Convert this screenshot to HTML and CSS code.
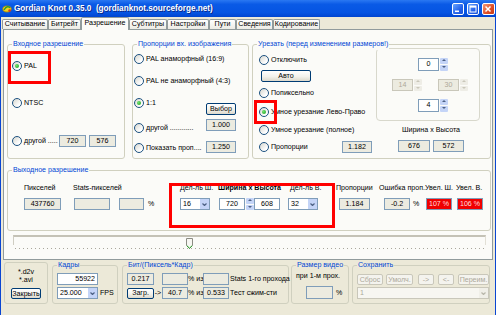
FILE: index.html
```html
<!DOCTYPE html>
<html lang="ru">
<head>
    <meta charset="UTF-8">
    <meta name="viewport" content="width=device-width, initial-scale=1.0">
    <title>Gordian Knot 0.35.0</title>
    <link rel="stylesheet" href="styles.css">
</head>
<body>
<div class="win">
    <div class="titlebar">
        <svg class="appicon" viewBox="0 0 10 10">
            <ellipse cx="5" cy="5" rx="4.2" ry="3" fill="#f3d21c" stroke="#b08a00" stroke-width="0.8"/>
            <path d="M2 6 C4 2 7 2 8 4" fill="none" stroke="#2f9a2f" stroke-width="1.4"/>
            <circle cx="7.6" cy="6.6" r="1.3" fill="#d63a1c"/>
        </svg>
        <span class="title">Gordian Knot 0.35.0&nbsp; (gordianknot.sourceforge.net)</span>
        <div class="capbtns">
            <span class="cb"><svg viewBox="0 0 10 10"><rect x="2" y="6.5" width="4" height="1.6" fill="#fff"/></svg></span>
            <span class="cb"><svg viewBox="0 0 10 10"><rect x="2" y="2" width="6" height="6" fill="none" stroke="#fff" stroke-width="1"/><rect x="2" y="2" width="6" height="1.6" fill="#fff"/></svg></span>
            <span class="cb close"><svg viewBox="0 0 10 10"><path d="M2.5 2.5 L7.5 7.5 M7.5 2.5 L2.5 7.5" stroke="#fff" stroke-width="1.5"/></svg></span>
        </div>
    </div>

    <div class="frame">
        <div class="tabs">
            <span class="tab">Считывание</span>
            <span class="tab">Битрейт</span>
            <span class="tab sel">Разрешение</span>
            <span class="tab">Субтитры</span>
            <span class="tab">Настройки</span>
            <span class="tab">Пути</span>
            <span class="tab">Сведения</span>
            <span class="tab">Кодирование</span>
        </div>

        <div class="page">
            <div class="toprow">
                <!-- input resolution -->
                <div class="grp g1">
                    <span class="cap">Входное разрешение</span>
                    <label class="opt r-pal"><i class="rb on"></i>PAL</label>
                    <label class="opt r-ntsc"><i class="rb"></i>NTSC</label>
                    <div class="opt r-oth">
                        <i class="rb"></i><span class="lead w33">другой .....</span>
                        <span class="fld ro w27">720</span>
                        <span class="fld ro w27 ml1">576</span>
                    </div>
                </div>

                <!-- input aspect -->
                <div class="grp g2">
                    <span class="cap">Пропорции вх. изображения</span>
                    <label class="opt a1"><i class="rb"></i>PAL анаморфный (16:9)</label>
                    <label class="opt a2"><i class="rb"></i>PAL не анаморфный (4:3)</label>
                    <div class="split a3">
                        <label class="opt"><i class="rb on"></i>1:1</label>
                        <span class="btn w30">Выбор</span>
                    </div>
                    <div class="split a4">
                        <label class="opt"><i class="rb"></i><span class="lead w53">другой ............</span></label>
                        <span class="fld ro w30">1.000</span>
                    </div>
                    <div class="split a5">
                        <label class="opt"><i class="rb"></i><span class="lead w54">Показать проп....</span></label>
                        <span class="fld ro w30">1.250</span>
                    </div>
                </div>

                <!-- crop -->
                <div class="grp g3">
                    <span class="cap">Урезать (перед изменением размеров!)</span>
                    <div class="crop-l">
                        <label class="opt c1"><i class="rb"></i>Отключить</label>
                        <span class="btn auto">Авто</span>
                        <label class="opt c2"><i class="rb"></i>Попиксельно</label>
                        <label class="opt c3"><i class="rb on"></i>Умное урезание Лево-Право</label>
                        <label class="opt c4"><i class="rb"></i>Умное урезание (полное)</label>
                        <div class="opt c5"><i class="rb"></i>Пропорции<span class="fld ro w30 push">1.182</span></div>
                    </div>
                    <div class="crop-r">
                        <div class="cpanel">
                            <div class="sb s-top"><span class="fld">0</span><span class="spin"><i></i><i></i></span></div>
                            <div class="sbrow">
                                <div class="sb s-l"><span class="fld off">14</span><span class="spin off"><i></i><i></i></span></div>
                                <div class="sb s-r"><span class="fld off">30</span><span class="spin off"><i></i><i></i></span></div>
                            </div>
                            <div class="sb s-bot"><span class="fld">4</span><span class="spin"><i></i><i></i></span></div>
                        </div>
                        <div class="wh">Ширина x Высота</div>
                        <div class="whf"><span class="fld ro w32">676</span><span class="fld ro w31">572</span></div>
                    </div>
                </div>
            </div>

            <!-- output resolution -->
            <div class="grp gout">
                <span class="cap">Выходное разрешение</span>
                <div class="col k1"><span class="lbl">Пикселей</span><div class="frow"><span class="fld ro w37">437760</span></div></div>
                <div class="col k2"><span class="lbl">Stats-пикселей</span><div class="frow"><span class="fld ro w36 ml1"></span><span class="fld ro w25 ml9"></span><span class="ml4">%</span></div></div>
                <div class="col k3"><span class="lbl">Дел-ль Ш.</span><div class="frow"><span class="combo w30"><span>16</span><b class="dd"><svg viewBox="0 0 5 3"><polyline points="0.5,0.5 2.5,2.5 4.5,0.5" fill="none" stroke="#4d6185" stroke-width="1.2"/></svg></b></span></div></div>
                <div class="col k4"><span class="lbl bold">Ширина x Высота</span><div class="frow"><span class="fld w26 ml1">720</span><span class="spin ml1"><i></i><i></i></span><span class="fld w26">608</span></div></div>
                <div class="col k5"><span class="lbl ml2">Дел-ль В.</span><div class="frow"><span class="combo w30"><span>32</span><b class="dd"><svg viewBox="0 0 5 3"><polyline points="0.5,0.5 2.5,2.5 4.5,0.5" fill="none" stroke="#4d6185" stroke-width="1.2"/></svg></b></span></div></div>
                <div class="col k6"><span class="lbl">Пропорции</span><div class="frow"><span class="fld ro w31 ml3">1.184</span></div></div>
                <div class="col k7"><span class="lbl">Ошибка проп.</span><div class="frow"><span class="fld ro w26 ml5">-0.2</span><span class="ml3">%</span></div></div>
                <div class="col k8"><span class="lbl">Увел. Ш.</span><div class="frow"><span class="fld red w26 ml1">107 %</span></div></div>
                <div class="col k9"><span class="lbl">Увел. В.</span><div class="frow"><span class="fld red w26 ml1">106 %</span></div></div>
            </div>

            <div class="slider">
                <div class="track"></div>
                <svg class="thumb" viewBox="0 0 7 11">
                    <path d="M0.5 0.5 H6.5 V7.5 L3.5 10.5 L0.5 7.5 Z" fill="#f7f7f2" stroke="#8c8c84"/>
                    <polyline points="0.8,7.6 3.5,10.2 6.2,7.6" fill="none" stroke="#21a121" stroke-width="1"/>
                </svg>
                <div class="ticks"></div>
            </div>
        </div>

        <div class="bottom">
            <div class="bgrp b1">
                <div class="ext">*.d2v<br>*.avi</div>
                <span class="btn closebtn">Закрыть</span>
            </div>
            <div class="bgrp b2">
                <span class="cap">Кадры</span>
                <span class="fld w41 frames">55922</span>
                <div class="brow">
                    <span class="combo w41"><span>25.000</span><b class="dd"><svg viewBox="0 0 5 3"><polyline points="0.5,0.5 2.5,2.5 4.5,0.5" fill="none" stroke="#4d6185" stroke-width="1.2"/></svg></b></span>
                    <span class="ml2">FPS</span>
                </div>
            </div>
            <div class="bgrp b3">
                <span class="cap">Бит/(Пиксель*Кадр)</span>
                <div class="brow r1">
                    <span class="fld ro w27">0.217</span>
                    <span class="fld ro w26 ml8"></span>
                    <span class="iz">% из</span>
                    <span class="fld ro w26"></span>
                    <span class="ml1">Stats 1-го прохода</span>
                </div>
                <div class="brow">
                    <span class="btn w27 h11">Загр.</span>
                    <span class="arr">-&gt;</span>
                    <span class="fld ro w26">40.7</span>
                    <span class="iz">% из</span>
                    <span class="fld ro w26">0.533</span>
                    <span class="ml1">Тест сжим-сти</span>
                </div>
            </div>
            <div class="bgrp b4">
                <span class="cap">Размер видео</span>
                <div class="sub">при 1-м прох.</div>
                <div class="brow vsize"><span class="fld ro w27 h13"></span><span class="ml3">%</span></div>
            </div>
            <div class="bgrp b5">
                <span class="cap">Сохранить</span>
                <div class="brow btns">
                    <span class="btn off h11 w26">Сброс</span>
                    <span class="btn off h11 w27 ml3">Умолч.</span>
                    <span class="btn off h11 w16 ml5">-&gt;</span>
                    <span class="btn off h11 w16 ml4">&lt;-</span>
                    <span class="btn off h11 w31 ml4">Переим.</span>
                </div>
                <div class="brow">
                    <span class="combo off w132"><span>1</span><b class="dd"><svg viewBox="0 0 5 3"><polyline points="0.5,0.5 2.5,2.5 4.5,0.5" fill="none" stroke="#b9b7aa" stroke-width="1.2"/></svg></b></span>
                </div>
            </div>
        </div>
    </div>

    <!-- red highlight marks -->
    <div class="mark m1"></div>
    <div class="mark m2"></div>
    <div class="mark m3"></div>
</div>
</body>
</html>
```

FILE: styles.css
```css
* {
    box-sizing: border-box;
}
body {
    margin: 0;
    background: #fff;
}
.win {
    position: relative;
    width: 496px;
    height: 315px;
    overflow: hidden;
    background: #ece9d8;
    font: 7.1px/10px "Liberation Sans", Arial, sans-serif;
    color: #000;
}

/* title bar */
.titlebar {
    height: 17px;
    display: flex;
    align-items: center;
    padding-left: 2px;
    color: #fff;
    background: linear-gradient(#2a78f2, #0a5ae6 25%, #0554e2 75%, #0045cf);
}
.appicon {
    width: 10px;
    height: 10px;
    margin-right: 2px;
}
.title {
    font-weight: bold;
    font-size: 8.2px;
    white-space: nowrap;
    text-shadow: 1px 1px #0b2a8a;
}
.capbtns {
    margin-left: auto;
    display: flex;
    gap: 3px;
    padding-right: 1px;
}
.cb {
    width: 12px;
    height: 12px;
    display: flex;
    border: 1px solid #fff;
    border-radius: 2px;
    background: linear-gradient(135deg, #6aa6ff, #2462ea 60%, #1a52d8);
}
.cb svg {
    width: 10px;
    height: 10px;
}
.cb.close {
    width: 13px;
    background: linear-gradient(135deg, #f19a7a, #de4d25 60%, #c53a16);
}

/* window body */
.frame {
    height: 298px;
    border-left: 1px solid #0a46d2;
    border-right: 1px solid #0a46d2;
}
.tabs {
    position: relative;
    z-index: 1;
    display: flex;
    align-items: flex-end;
    height: 12px;
    padding-left: 1px;
}
.tab {
    height: 10px;
    border: 1px solid #919b9c;
    border-bottom: none;
    border-radius: 2px 2px 0 0;
    background: linear-gradient(#fff, #ecebe4);
    text-align: center;
    line-height: 9px;
    white-space: nowrap;
}
.tab.sel {
    height: 13px;
    margin-bottom: -1px;
    background: #fbfbf8;
    line-height: 11px;
}
.tab:nth-child(1) { width: 46px; }
.tab:nth-child(2) { width: 33px; }
.tab:nth-child(3) { width: 48px; }
.tab:nth-child(4) { width: 38px; }
.tab:nth-child(5) { width: 42px; }
.tab:nth-child(6) { width: 27px; }
.tab:nth-child(7) { width: 37px; }
.tab:nth-child(8) { width: 47px; }

.page {
    height: 231px;
    margin: 0 2px;
    border: 1px solid #919b9c;
    background: #fbfbf8;
}

/* group boxes */
.grp,
.bgrp {
    position: relative;
    border: 1px solid #d0d0bf;
    border-radius: 3px;
}
.cap {
    position: absolute;
    top: -6px;
    left: 4px;
    padding: 0 1px;
    line-height: 11px;
    color: #0046d5;
    background: #fbfbf8;
    white-space: nowrap;
}
.bgrp .cap {
    background: #ece9d8;
}

.toprow {
    display: flex;
    align-items: flex-start;
    margin-top: 14px;
}
.g1 {
    width: 118px;
    height: 115px;
    margin-left: 3px;
    padding-left: 4px;
}
.g2 {
    width: 117px;
    height: 115px;
    margin-left: 7px;
    padding: 0 12px 0 1px;
}
.g3 {
    display: flex;
    align-items: flex-start;
    width: 239px;
    height: 115px;
    margin-left: 3px;
}

/* controls */
.opt {
    display: flex;
    align-items: center;
    gap: 2px;
    height: 12px;
    white-space: nowrap;
}
.rb {
    position: relative;
    flex: none;
    width: 10px;
    height: 10px;
    border: 1px solid #1c5180;
    border-radius: 50%;
    background: linear-gradient(135deg, #d6d6ce, #fff 75%);
}
.rb.on::after {
    content: "";
    position: absolute;
    left: 2px;
    top: 2px;
    width: 4px;
    height: 4px;
    border-radius: 50%;
    background: radial-gradient(circle at 35% 35%, #6ee46e, #1a9a1a);
}
.lead {
    white-space: nowrap;
}
.fld {
    flex: none;
    display: block;
    height: 12px;
    border: 1px solid #7f9db9;
    background: #fff;
    text-align: center;
    line-height: 10px;
    white-space: nowrap;
}
.fld.ro {
    background: #ecebe0;
}
.fld.off {
    border-color: #c9c7ba;
    background: #ecebe0;
    color: #aca899;
}
.fld.red {
    background: #f00000;
    color: #ffdede;
}
.btn {
    flex: none;
    display: flex;
    align-items: center;
    justify-content: center;
    height: 12px;
    border: 1px solid #003c74;
    border-radius: 2px;
    background: linear-gradient(#fff, #f3f2ec 55%, #dcd8cb);
    white-space: nowrap;
}
.btn.off {
    border-color: #c9c7ba;
    background: #f4f3ee;
    color: #aca899;
}
.spin {
    flex: none;
    display: flex;
    flex-direction: column;
    gap: 1px;
    width: 8px;
    height: 12px;
}
.spin i {
    position: relative;
    flex: 1;
    border-radius: 1px;
    background: #c4d4f7;
}
.spin i::after {
    content: "";
    position: absolute;
    left: 2px;
    top: 1px;
    border-left: 2px solid transparent;
    border-right: 2px solid transparent;
    border-bottom: 2px solid #4d6185;
}
.spin i + i::after {
    border-bottom: none;
    border-top: 2px solid #4d6185;
}
.spin.off i {
    background: #eeede6;
}
.spin.off i::after {
    border-bottom-color: #c9c7ba;
}
.spin.off i + i::after {
    border-top-color: #c9c7ba;
}
.combo {
    flex: none;
    display: flex;
    height: 12px;
    border: 1px solid #7f9db9;
    background: #fff;
}
.combo span {
    flex: 1;
    padding-left: 2px;
    line-height: 10px;
}
.combo .dd {
    display: flex;
    align-items: center;
    justify-content: center;
    width: 9px;
    background: #c4d4f7;
}
.combo .dd svg {
    width: 5px;
    height: 3px;
}
.combo.off {
    border-color: #c9c7ba;
    background: #f7f6f1;
    color: #aca899;
}
.combo.off .dd {
    background: #f0efe8;
}

/* sizes */
.w16 { width: 16px; }
.w25 { width: 25px; }
.w26 { width: 26px; }
.w27 { width: 27px; }
.w30 { width: 30px; }
.w31 { width: 31px; }
.w32 { width: 32px; }
.w33 { width: 33px; }
.w36 { width: 36px; }
.w37 { width: 37px; }
.w41 { width: 41px; }
.w53 { width: 53px; }
.w54 { width: 54px; }
.w132 { width: 132px; }
.h11 { height: 11px; }
.h13 { height: 13px; }
.ml1 { margin-left: 1px; }
.ml2 { margin-left: 2px; }
.ml3 { margin-left: 3px; }
.ml4 { margin-left: 4px; }
.ml5 { margin-left: 5px; }
.ml8 { margin-left: 8px; }
.ml9 { margin-left: 9px; }

/* input resolution */
.r-pal { margin-top: 15px; }
.r-ntsc { margin-top: 25px; }
.r-oth { margin-top: 26px; }

/* input aspect */
.split {
    display: flex;
    justify-content: space-between;
}
.a1 { margin-top: 8px; }
.a2 { margin-top: 10px; }
.a3 {
    height: 18px;
    margin-top: 10px;
    align-items: flex-start;
}
.a3 .btn { margin-top: 6px; }
.a4 {
    height: 15px;
    margin-top: 4px;
    align-items: flex-end;
}
.a5 {
    height: 13px;
    margin-top: 7px;
    align-items: flex-end;
}
.a4 .fld,
.a5 .fld {
    align-self: flex-start;
}

/* crop */
.crop-l {
    width: 123px;
    padding-left: 6px;
}
.c1 { margin-top: 9px; }
.auto {
    width: 50px;
    margin: 4px 0 0 2px;
}
.c2 { margin-top: 5px; }
.c3 { margin-top: 7px; }
.c4 { margin-top: 6px; }
.c5 { margin-top: 5px; }
.push {
    margin-left: auto;
    margin-right: 4px;
}
.crop-r {
    width: 104px;
}
.cpanel {
    height: 73px;
    margin-top: 3px;
    border: 1px solid #d8d8cc;
    border-radius: 4px;
}
.sb {
    display: flex;
    gap: 1px;
    width: 30px;
    height: 13px;
}
.sb .fld {
    width: 21px;
    height: 13px;
    line-height: 11px;
}
.sb .spin {
    height: 13px;
}
.s-top {
    margin: 9px 0 0 41px;
}
.sbrow {
    display: flex;
    margin-top: 8px;
}
.sbrow .sb {
    height: 12px;
}
.sbrow .sb .fld,
.sbrow .sb .spin {
    height: 12px;
    line-height: 10px;
}
.s-l { margin-left: 15px; }
.s-r { margin-left: 16px; }
.s-bot {
    margin: 8px 0 0 41px;
}
.wh {
    width: 66px;
    margin: 4px 0 0 22px;
    text-align: center;
    white-space: nowrap;
}
.whf {
    display: flex;
    gap: 3px;
    margin: 5px 0 0 22px;
}

/* output resolution */
.gout {
    display: flex;
    width: 484px;
    height: 61px;
    margin: 11px 0 0 3px;
    padding-left: 16px;
}
.col {
    flex: none;
    padding-top: 12px;
}
.lbl {
    display: block;
    height: 10px;
    white-space: nowrap;
}
.bold {
    font-weight: bold;
}
.frow {
    display: flex;
    align-items: center;
    height: 12px;
    margin-top: 5px;
    white-space: nowrap;
}
.k1 { width: 49px; }
.k2 { width: 107px; }
.k3 { width: 38px; }
.k4 { width: 70px; }
.k5 { width: 48px; }
.k6 { width: 43px; }
.k7 { width: 46px; }
.k8 { width: 31px; }
.k9 { width: 34px; }

/* slider */
.slider {
    position: relative;
    width: 473px;
    height: 16px;
    margin: 4px 0 0 9px;
}
.track {
    height: 10px;
    margin-top: 2px;
    border-top: 2px solid #c4c2b6;
    border-left: 1px solid #cfcdc2;
    border-right: 1px solid #e2e0d6;
}
.thumb {
    position: absolute;
    left: 173px;
    top: 3px;
    width: 7px;
    height: 11px;
}
.ticks {
    width: 469px;
    height: 1px;
    margin: 3px 0 0 2px;
    background: repeating-linear-gradient(90deg, #a9a79c 0 1px, transparent 1px 4px);
}

/* bottom strip */
.bottom {
    display: flex;
    align-items: flex-end;
    height: 42px;
    margin: 2px 0 0 3px;
}
.bgrp {
    height: 39px;
    padding-left: 4px;
}
.b1 {
    width: 44px;
    height: 42px;
    padding: 5px 0 0;
}
.ext {
    line-height: 8px;
    text-align: center;
}
.closebtn {
    width: 30px;
    height: 11px;
    margin: 4px auto 0;
}
.b2 {
    width: 66px;
    margin-left: 4px;
}
.frames {
    margin-top: 7px;
    padding-right: 2px;
    text-align: right;
}
.brow {
    display: flex;
    align-items: center;
    height: 12px;
    margin-top: 2px;
    white-space: nowrap;
}
.b3 {
    width: 167px;
    margin-left: 4px;
}
.r1 {
    margin-top: 7px;
}
.iz {
    width: 15px;
    text-align: center;
}
.arr {
    width: 8px;
    text-align: center;
}
.b4 {
    width: 58px;
    margin-left: 2px;
}
.sub {
    height: 8px;
    margin-top: 6px;
    line-height: 8px;
    white-space: nowrap;
}
.vsize {
    height: 13px;
    margin: 6px 0 0 10px;
}
.b5 {
    width: 138px;
    margin-left: 3px;
}
.btns {
    height: 11px;
    margin-top: 8px;
}

/* red highlight marks drawn over the dialog */
.mark {
    position: absolute;
    border: 3px solid #f00;
}
.m1 {
    left: 8px;
    top: 51px;
    width: 43px;
    height: 33px;
}
.m2 {
    left: 254px;
    top: 100px;
    width: 23px;
    height: 24px;
}
.m3 {
    left: 169px;
    top: 183px;
    width: 166px;
    height: 45px;
}
```
